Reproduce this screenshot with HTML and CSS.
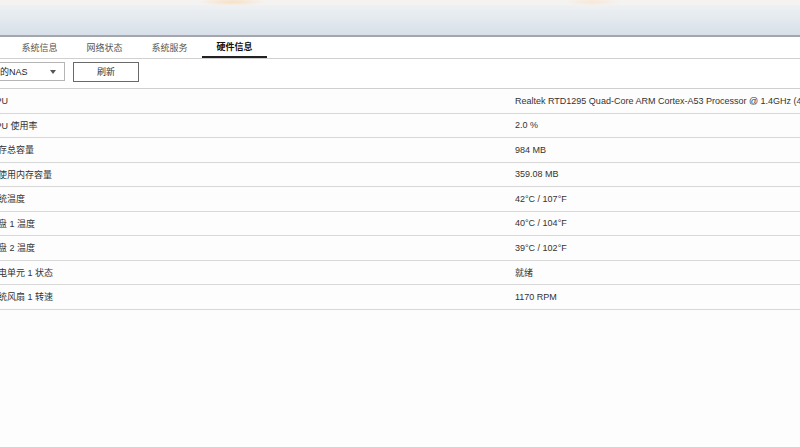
FILE: index.html
```html
<!DOCTYPE html>
<html lang="zh-CN">
<head>
<meta charset="utf-8">
<link rel="stylesheet" href="styles.css">
</head>
<body>
<div class="topband"></div>
<div class="header"></div>
<div class="tabs">
  <div class="tab">系统信息</div>
  <div class="tab">网络状态</div>
  <div class="tab">系统服务</div>
  <div class="tab active">硬件信息</div>
</div>
<div class="toolbar">
  <div class="select"><span>我的NAS</span><span class="arrow"></span></div>
  <div class="btn">刷新</div>
</div>
<div class="table">
  <div class="row"><div class="k">CPU</div><div class="v">Realtek RTD1295 Quad-Core ARM Cortex-A53 Processor @ 1.4GHz (4 核)</div></div>
  <div class="row"><div class="k">CPU 使用率</div><div class="v">2.0 %</div></div>
  <div class="row"><div class="k">内存总容量</div><div class="v">984 MB</div></div>
  <div class="row"><div class="k">已使用内存容量</div><div class="v">359.08 MB</div></div>
  <div class="row"><div class="k">系统温度</div><div class="v">42°C / 107°F</div></div>
  <div class="row"><div class="k">硬盘 1 温度</div><div class="v">40°C / 104°F</div></div>
  <div class="row"><div class="k">硬盘 2 温度</div><div class="v">39°C / 102°F</div></div>
  <div class="row"><div class="k">供电单元 1 状态</div><div class="v">就绪</div></div>
  <div class="row"><div class="k">系统风扇 1 转速</div><div class="v">1170 RPM</div></div>
</div>
</body>
</html>
```
FILE: styles.css
```css
html, body {
  margin: 0;
  padding: 0;
  background: #fdfdfd;
  overflow: hidden;
  width: 800px;
  height: 447px;
  font-family: "Liberation Sans", "Noto Sans CJK SC", sans-serif;
  font-size: 9px;
  color: #333;
}
.topband {
  height: 5px;
  background:
    radial-gradient(ellipse 34px 4px at 232px 2px, rgba(255, 200, 140, 0.45), rgba(255, 220, 180, 0) 100%),
    radial-gradient(ellipse 28px 4px at 592px 2px, rgba(255, 210, 160, 0.35), rgba(255, 220, 180, 0) 100%),
    #f4f3f1;
}
.header {
  height: 30px;
  background: linear-gradient(#eef1f4, #dde4eb 75%, #d7dfe8);
  border-bottom: 2px solid #a3a6aa;
}
.tabs {
  display: flex;
  padding-left: 7px;
  height: 22px;
  box-sizing: border-box;
  border-bottom: 1px solid #d0d0d0;
  background: #fff;
}
.tab {
  width: 65px;
  text-align: center;
  line-height: 21px;
  padding-top: 1px;
  color: #555;
  box-sizing: border-box;
}
.tab.active {
  color: #111;
  font-weight: bold;
  border-bottom: 2px solid #222;
  line-height: 19px;
}
.toolbar {
  display: flex;
  align-items: flex-start;
  gap: 8px;
  height: 30px;
  padding-top: 3px;
  box-sizing: border-box;
  border-bottom: 1px solid #d0d0d0;
  background: #fff;
}
.select {
  margin-left: -20px;
  width: 85px;
  height: 19px;
  box-sizing: border-box;
  border: 1px solid #b5b5b5;
  border-left: none;
  display: flex;
  align-items: center;
  justify-content: space-between;
  padding: 0 8px 0 11px;
  color: #222;
  background: #fff;
}
.arrow {
  width: 0;
  height: 0;
  border-left: 3px solid transparent;
  border-right: 3px solid transparent;
  border-top: 4px solid #555;
}
.btn {
  width: 66px;
  height: 20px;
  box-sizing: border-box;
  border: 1px solid #6a6a6a;
  text-align: center;
  line-height: 18px;
  color: #333;
  background: #fff;
}
.table {
  background: #fdfdfd;
}
.row {
  display: flex;
  height: 24.5px;
  box-sizing: border-box;
  border-bottom: 1px solid #d8d8d8;
  align-items: center;
}
.k {
  flex: none;
  margin-left: -11px;
  width: 526px;
  color: #333;
  white-space: nowrap;
}
.v {
  flex: none;
  white-space: nowrap;
  color: #333;
}
```
